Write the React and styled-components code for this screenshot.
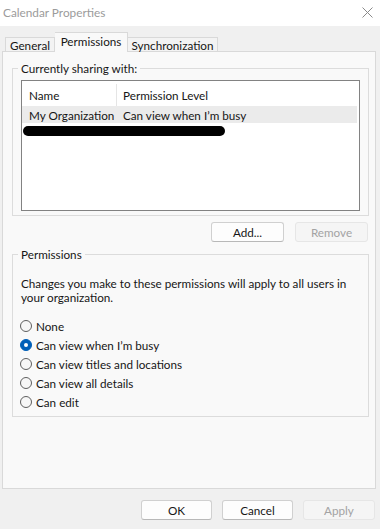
import React from "react";
import styled, { createGlobalStyle } from "styled-components";

const Global = createGlobalStyle`
  html, body { margin: 0; padding: 0; }
  body {
    background: #f0f0f0;
    font-family: "Lato", "Noto Sans", sans-serif;
    font-size: 11.7px;
    color: #161616;
  }
  * { box-sizing: border-box; }
`;

const Window = styled.div`
  width: 380px;
  height: 529px;
  overflow: hidden;
  display: flex;
  flex-direction: column;
  background: #f0f0f0;
`;

const TitleBar = styled.div`
  height: 26px;
  flex: none;
  background: #ffffff;
  display: flex;
  align-items: center;
  justify-content: space-between;
  padding: 0 7px 2px 3px;
`;

const Title = styled.span`
  color: #9b9b9b;
  font-size: 11.8px;
`;

const Body = styled.div`
  flex: 1;
  display: flex;
  flex-direction: column;
  padding: 7px 4px 0 2px;
`;

const TabStrip = styled.div`
  height: 19px;
  display: flex;
  align-items: flex-end;
  padding-left: 3px;
  position: relative;
  z-index: 1;
  margin-bottom: -1px;
`;

const Tab = styled.div`
  width: ${(p) => p.$w}px;
  height: ${(p) => (p.$active ? 20 : 15)}px;
  display: flex;
  align-items: center;
  justify-content: center;
  border: 1px solid #d9d9d9;
  border-bottom: ${(p) => (p.$active ? "none" : "1px solid #d9d9d9")};
  border-left: ${(p) => (p.$noLeft ? "none" : "1px solid #d9d9d9")};
  background: ${(p) => (p.$active ? "#f9f9f9" : "#f3f3f3")};
  padding-bottom: ${(p) => (p.$active ? 3 : 0)}px;
`;

const Panel = styled.div`
  height: 438px;
  background: #f9f9f9;
  border: 1px solid #d9d9d9;
  display: flex;
  flex-direction: column;
  padding: 8px 6px 0 9px;
`;

const Group = styled.fieldset`
  margin: ${(p) => p.$mt || 0}px 0 0 0;
  border: 1px solid #dcdcdc;
  padding: ${(p) => p.$pad};
  min-width: 0;
  display: flex;
  flex-direction: column;
`;

const Legend = styled.legend`
  padding: 0 3px;
  margin-left: -3px;
  line-height: 16px;
`;

const ListBox = styled.div`
  height: 131px;
  background: #ffffff;
  border: 1px solid #828282;
  display: flex;
  flex-direction: column;
  padding: 0 2px 0 0;
`;

const Row = styled.div`
  display: flex;
  height: ${(p) => p.$h}px;
  align-items: center;
  background: ${(p) => p.$bg || "transparent"};
  padding-top: ${(p) => p.$pt || 0}px;
`;

const Cell = styled.div`
  width: ${(p) => (p.$w ? `${p.$w}px` : "auto")};
  flex: ${(p) => (p.$w ? "none" : 1)};
  height: 100%;
  display: flex;
  align-items: center;
  padding-left: ${(p) => p.$pl}px;
  border-right: ${(p) => (p.$divider ? "1px solid #e5e5e5" : "none")};
  white-space: nowrap;
`;

const Redaction = styled.div`
  margin: 3px 0 0 1px;
  width: 202px;
  height: 10px;
  border-radius: 5px;
  background: #000;
`;

const ButtonRow = styled.div`
  display: flex;
  justify-content: flex-end;
  gap: 11px;
  margin-top: ${(p) => p.$mt}px;
  padding-right: ${(p) => p.$pr}px;
`;

const Button = styled.button`
  width: ${(p) => p.$w}px;
  height: 20px;
  padding: 0;
  font: inherit;
  border-radius: 3px;
  background: ${(p) => (p.disabled ? "#f5f5f5" : "#fdfdfd")};
  border: 1px solid ${(p) => (p.disabled ? "#e6e6e6" : "#d0d0d0")};
  border-bottom-color: ${(p) => (p.disabled ? "#e6e6e6" : "#b8b8b8")};
  color: ${(p) => (p.disabled ? "#a3a3a3" : "#161616")};
`;

const Description = styled.p`
  margin: 14px 0 0 0;
  line-height: 14px;
`;

const RadioList = styled.div`
  margin-top: 12px;
  display: flex;
  flex-direction: column;
`;

const RadioRow = styled.label`
  height: 19px;
  display: flex;
  align-items: center;
  gap: 4px;
`;

const RadioDot = styled.span`
  width: 12px;
  height: 12px;
  border-radius: 50%;
  flex: none;
  margin-left: -1px;
  background: ${(p) => (p.$checked ? "#005fb8" : "#f7f7f7")};
  border: 1px solid ${(p) => (p.$checked ? "#005fb8" : "#5f5f5f")};
  display: flex;
  align-items: center;
  justify-content: center;
  &::after {
    content: "";
    display: ${(p) => (p.$checked ? "block" : "none")};
    width: 4px;
    height: 4px;
    border-radius: 50%;
    background: #ffffff;
  }
`;

const Footer = styled.div`
  display: flex;
  justify-content: flex-end;
  gap: 10px;
  padding: 11px 5px 0 0;
  margin-right: -4px;
`;

const CloseIcon = () => (
  <svg width="11" height="11" viewBox="0 0 11 11">
    <path d="M0.5 0.5 L10.5 10.5 M10.5 0.5 L0.5 10.5" stroke="#8a8a8a" strokeWidth="1" fill="none" />
  </svg>
);

const options = [
  "None",
  "Can view when I\u2019m busy",
  "Can view titles and locations",
  "Can view all details",
  "Can edit",
];

export default function App() {
  return (
    <Window>
      <Global />
      <TitleBar>
        <Title>Calendar Properties</Title>
        <CloseIcon />
      </TitleBar>
      <Body>
        <TabStrip>
          <Tab $w={50}>General</Tab>
          <Tab $w={73} $active $noLeft>Permissions</Tab>
          <Tab $w={90} $noLeft>Synchronization</Tab>
        </TabStrip>
        <Panel>
          <Group $pad="4px 8px 4px 8px">
            <Legend>Currently sharing with:</Legend>
            <ListBox>
              <Row $h={25} $pt={3}>
                <Cell $w={95} $pl={7} $divider>Name</Cell>
                <Cell $pl={6}>Permission Level</Cell>
              </Row>
              <Row $h={17} $bg="#ebebeb">
                <Cell $w={95} $pl={7}>My Organization</Cell>
                <Cell $pl={6}>Can view when I’m busy</Cell>
              </Row>
              <Redaction />
            </ListBox>
          </Group>
          <ButtonRow $mt={6} $pr={1}>
            <Button $w={73}>Add...</Button>
            <Button $w={73} disabled>Remove</Button>
          </ButtonRow>
          <Group $mt={4} $pad="0 8px 5px 8px">
            <Legend>Permissions</Legend>
            <Description>
              Changes you make to these permissions will apply to all users in
              your organization.
            </Description>
            <RadioList>
              {options.map((o, i) => (
                <RadioRow key={o}>
                  <RadioDot $checked={i === 1} />
                  {o}
                </RadioRow>
              ))}
            </RadioList>
          </Group>
        </Panel>
        <Footer>
          <Button $w={71}>OK</Button>
          <Button $w={71}>Cancel</Button>
          <Button $w={72} disabled>Apply</Button>
        </Footer>
      </Body>
    </Window>
  );
}
